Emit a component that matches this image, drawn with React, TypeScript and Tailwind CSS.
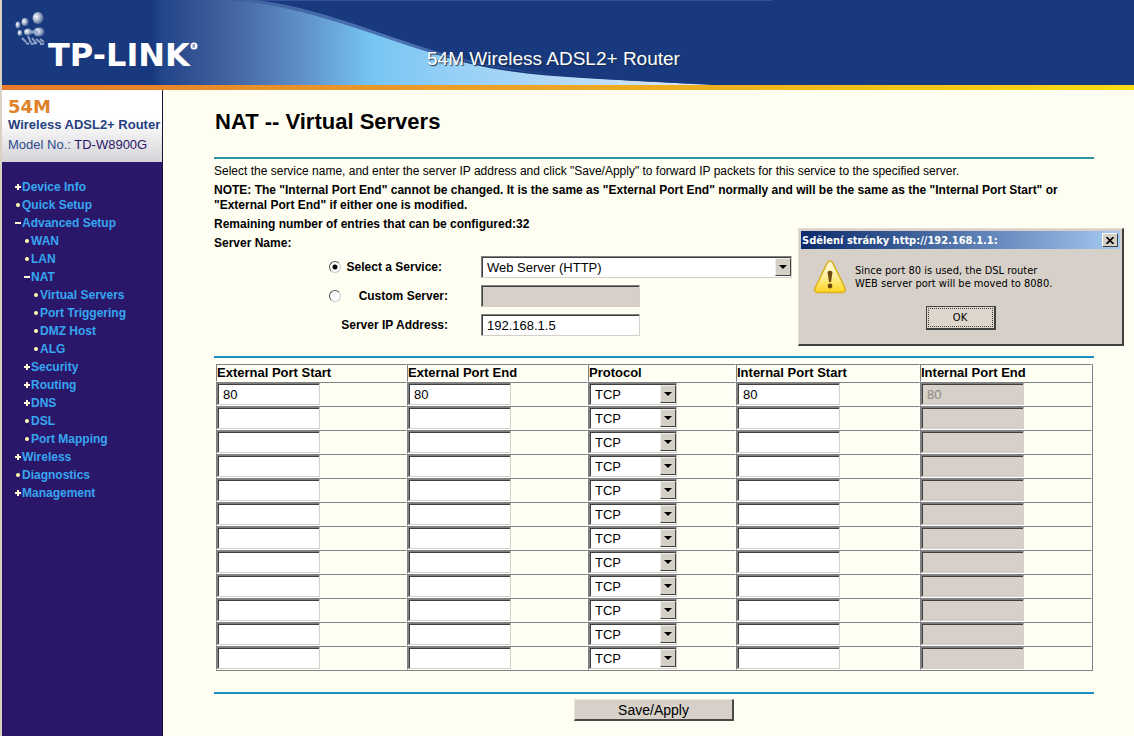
import React, { useState } from "react";
import clsx from "clsx";

const menu = [
  { label: "Device Info", level: 0, mark: "plus" },
  { label: "Quick Setup", level: 0, mark: "dot" },
  { label: "Advanced Setup", level: 0, mark: "minus" },
  { label: "WAN", level: 1, mark: "dot" },
  { label: "LAN", level: 1, mark: "dot" },
  { label: "NAT", level: 1, mark: "minus" },
  { label: "Virtual Servers", level: 2, mark: "dot" },
  { label: "Port Triggering", level: 2, mark: "dot" },
  { label: "DMZ Host", level: 2, mark: "dot" },
  { label: "ALG", level: 2, mark: "dot" },
  { label: "Security", level: 1, mark: "plus" },
  { label: "Routing", level: 1, mark: "plus" },
  { label: "DNS", level: 1, mark: "plus" },
  { label: "DSL", level: 1, mark: "dot" },
  { label: "Port Mapping", level: 1, mark: "dot" },
  { label: "Wireless", level: 0, mark: "plus" },
  { label: "Diagnostics", level: 0, mark: "dot" },
  { label: "Management", level: 0, mark: "plus" },
];

const indents = ["pl-3", "pl-[21px]", "pl-[30px]"];

const columns = [
  { title: "External Port Start", width: "w-[191px]" },
  { title: "External Port End", width: "w-[181px]" },
  { title: "Protocol", width: "w-[148px]" },
  { title: "Internal Port Start", width: "w-[184px]" },
  { title: "Internal Port End", width: "w-[172px]" },
];

const emptyRow = { extStart: "", extEnd: "", protocol: "TCP", intStart: "" };

const sunken =
  "h-[22px] border border-t-[#808080] border-l-[#808080] border-r-[#d4d0c8] border-b-[#d4d0c8] bg-white pl-[5px] text-[13px] text-black shadow-[inset_1px_1px_0_#404040] outline-none disabled:bg-[#d6d0c9] disabled:text-[#8a8680]";

function Mark({ kind }: { kind: string }) {
  return (
    <svg width="8" height="8" viewBox="0 0 8 8" className="shrink-0">
      {kind === "dot" && <circle cx="4" cy="4" r="2" fill="#ffffb0" />}
      {kind !== "dot" && <rect x="1" y="3" width="6" height="2" fill="#fff8d8" />}
      {kind === "plus" && <rect x="3" y="1" width="2" height="6" fill="#fff8d8" />}
    </svg>
  );
}

function WinSelect({
  label,
  value,
  options,
  width,
  onChange,
}: {
  label: string;
  value: string;
  options: string[];
  width: string;
  onChange: (v: string) => void;
}) {
  return (
    <div className={clsx("relative", width)}>
      <select
        aria-label={label}
        value={value}
        onChange={(e) => onChange(e.target.value)}
        className={clsx(sunken, "block w-full appearance-none")}
      >
        {options.map((o) => (
          <option key={o}>{o}</option>
        ))}
      </select>
      <span className="pointer-events-none absolute top-[2px] right-px flex h-[18px] w-4 items-center justify-center border border-t-[#f0eee8] border-r-[#404040] border-b-[#404040] border-l-[#f0eee8] bg-[#d4d0c8]">
        <svg width="8" height="4" viewBox="0 0 8 4">
          <path d="M0 0h8L4 4z" fill="#000" />
        </svg>
      </span>
    </div>
  );
}

function Banner() {
  return (
    <header className="relative flex h-[90px] items-start overflow-hidden border-b-5 border-[#f0b41c] bg-[#18397d] [border-image:linear-gradient(90deg,#e8792a,#e8962a_30%,#efb31c_65%,#fadc10)_1]">
      <svg
        width="772"
        height="85"
        viewBox="0 0 772 85"
        className="absolute top-0 left-0"
      >
        <defs>
          <linearGradient id="sky" gradientUnits="userSpaceOnUse" x1="150" y1="0" x2="700" y2="0">
            <stop offset="0" stopColor="#18397d" />
            <stop offset="0.02" stopColor="#23458a" />
            <stop offset="0.14" stopColor="#42639f" />
            <stop offset="0.27" stopColor="#5f8fc6" />
            <stop offset="0.4" stopColor="#76c5f2" />
            <stop offset="0.55" stopColor="#96d0f6" />
            <stop offset="0.8" stopColor="#bcdcf6" />
            <stop offset="1" stopColor="#dfe8f0" />
          </linearGradient>
          <linearGradient id="rim" gradientUnits="userSpaceOnUse" x1="200" y1="0" x2="560" y2="0">
            <stop offset="0" stopColor="#3d5c9b" />
            <stop offset="0.55" stopColor="#4a74b4" />
            <stop offset="1" stopColor="#18397d" />
          </linearGradient>
        </defs>
        <path d="M210 0H770V1H280z" fill="#34529a" />
        <path
          d="M225 0C300 4 350 27 430 53S560 76 710 85H150V0z"
          fill="url(#sky)"
        />
        <path
          d="M222 0H255C315 8 360 28 430 50S560 76 700 84C560 78 495 72 430 53S300 4 222 0z"
          fill="url(#rim)"
        />
      </svg>
      <svg
        width="34"
        height="36"
        viewBox="0 0 34 36"
        className="relative mt-[11px] ml-3 shrink-0"
      >
        <defs>
          <radialGradient id="ball" cx="0.35" cy="0.4" r="0.7">
            <stop offset="0" stopColor="#fff" />
            <stop offset="0.4" stopColor="#b4c2d8" />
            <stop offset="1" stopColor="#3d5688" />
          </radialGradient>
        </defs>
        <ellipse cx="24" cy="7" rx="5.500" ry="6" fill="url(#ball)" />
        <ellipse cx="11" cy="11" rx="3.500" ry="4" fill="url(#ball)" />
        <ellipse cx="4" cy="14" rx="2.500" ry="3.500" fill="url(#ball)" />
        <ellipse cx="6" cy="22" rx="2.500" ry="3" fill="url(#ball)" />
        <ellipse cx="14" cy="21" rx="4" ry="3.500" fill="url(#ball)" />
        <ellipse cx="25" cy="21" rx="5.500" ry="4.500" fill="url(#ball)" />
        <path d="M16 21H24" stroke="#8fa3c6" strokeWidth="3" />
        <path
          d="M8 27l4 4M14 25l3 7M18 27l4 5M22 28l5 4M26 28l4 3M12 32l3 1M17 33l6-1M26 33h4"
          stroke="#8ea1c4"
          strokeWidth="2"
          fill="none"
        />
      </svg>
      <div className="relative mt-[38px] flex text-white">
        <span className="font-['DejaVu_Sans',sans-serif] text-[32px] leading-[34px] font-bold">
          TP-LINK
        </span>
        <svg width="8" height="8" viewBox="0 0 8 8" className="mt-1">
          <circle cx="4" cy="4" r="3.500" fill="#fff" />
          <path d="M3 6V2.500H4.500V4H3M4 4L5 6" stroke="#5c78a8" strokeWidth="0.8" fill="none" />
        </svg>
      </div>
      <p className="absolute top-12 left-[425px] text-[19px] leading-[22px] whitespace-nowrap text-white [text-shadow:1px_1px_1px_#1c2f50]">
        54M Wireless ADSL2+ Router
      </p>
    </header>
  );
}

function Sidebar() {
  return (
    <aside className="w-[161px] shrink-0 border-r border-[#1a1238] bg-[#2b1769]">
      <div className="h-[72px] bg-linear-to-b from-white from-40% to-[#d4d4d8] px-[6px] pt-2 text-[13px] leading-[20px] whitespace-nowrap text-[#2f4a8c]">
        <p className="font-['DejaVu_Sans',sans-serif] text-[18px] leading-[17px] font-bold text-[#e0822a]">
          54M
        </p>
        <p className="font-bold text-[#27407f]">Wireless ADSL2+ Router</p>
        <p>
          Model No.: <span className="text-[#2b1769]">TD-W8900G</span>
        </p>
      </div>
      <nav className="pt-4">
        <ul>
          {menu.map((item) => (
            <li key={item.label} className={indents[item.level]}>
              <a
                href="#"
                className="flex items-center text-[12px] leading-[18px] font-bold whitespace-nowrap text-[#36a6f0]"
              >
                <Mark kind={item.mark} />
                {item.label}
              </a>
            </li>
          ))}
        </ul>
      </nav>
    </aside>
  );
}

function Alert({ onClose }: { onClose: () => void }) {
  return (
    <div
      role="alertdialog"
      aria-labelledby="alert-title"
      className="absolute top-[228px] right-[10px] w-[326px] border-t border-r-2 border-b-2 border-l border-t-[#e4e0d8] border-r-[#404040] border-b-[#404040] border-l-[#e4e0d8] bg-[#d6d0c9] p-[2px] font-['DejaVu_Sans_Condensed','DejaVu_Sans',sans-serif] text-[11px] leading-[13px] text-black"
    >
      <div className="flex h-[18px] items-center justify-between bg-linear-to-r from-[#0c2a6c] to-[#a6caf0] pr-[2px] pl-px">
        <span id="alert-title" className="font-bold whitespace-nowrap text-white">
          Sdělení stránky http://192.168.1.1:
        </span>
        <button
          aria-label="Close"
          onClick={onClose}
          className="flex h-[14px] w-4 items-center justify-center border border-t-white border-r-[#404040] border-b-[#404040] border-l-white bg-[#d4d0c8]"
        >
          <svg width="8" height="7" viewBox="0 0 8 7">
            <path d="M0.500 0L7.500 7M7.500 0L0.500 7" stroke="#000" strokeWidth="1.6" />
          </svg>
        </button>
      </div>
      <div className="flex gap-2 px-3 pt-[11px]">
        <svg width="34" height="34" viewBox="0 0 34 34" className="shrink-0">
          <defs>
            <linearGradient id="warn" x1="0" y1="0" x2="0" y2="1">
              <stop offset="0" stopColor="#fffbe0" />
              <stop offset="0.5" stopColor="#fff09a" />
              <stop offset="1" stopColor="#ffd41c" />
            </linearGradient>
          </defs>
          <path
            d="M14.500 2.500Q17 -0.500 19.500 2.500L32 28Q33.500 32.500 29 32.500H5Q0.500 32.500 2 28z"
            fill="url(#warn)"
            stroke="#d8b020"
            strokeWidth="1.500"
          />
          <path d="M14.500 12Q17 9.500 19.500 12L18 22H16z" fill="#6d4a10" />
          <circle cx="17" cy="26" r="2.400" fill="#6d4a10" />
        </svg>
        <p className="pt-1">
          Since port 80 is used, the DSL router
          <br />
          WEB server port will be moved to 8080.
        </p>
      </div>
      <div className="flex justify-center pt-3 pb-3">
        <button
          onClick={onClose}
          className="h-6 w-[70px] border border-r-2 border-b-2 border-[#404040] bg-[#dcd6cc] p-px"
        >
          <span className="flex h-full items-center justify-center border border-dotted border-[#404040]">
            OK
          </span>
        </button>
      </div>
    </div>
  );
}

export default function App() {
  const [mode, setMode] = useState("service");
  const [service, setService] = useState("Web Server (HTTP)");
  const [custom, setCustom] = useState("");
  const [address, setAddress] = useState("192.168.1.5");
  const [showAlert, setShowAlert] = useState(true);
  const [rows, setRows] = useState(() => [
    { extStart: "80", extEnd: "80", protocol: "TCP", intStart: "80" },
    ...Array.from({ length: 11 }, () => ({ ...emptyRow })),
  ]);

  const update = (index: number, key: string, value: string) => {
    setRows((prev) =>
      prev.map((row, i) => (i === index ? { ...row, [key]: value } : row))
    );
  };

  const radio =
    "size-3 appearance-none rounded-full border border-t-[#555] border-r-[#ccc] border-b-[#ccc] border-l-[#555] bg-white checked:bg-[radial-gradient(circle,#000_2px,#fff_3px)]";

  return (
    <div className="relative flex min-h-screen flex-col border-l-2 border-[#d9d2c2] bg-[#fffef2] font-['Liberation_Sans',Arial,sans-serif] text-[12px] leading-[15px] text-black">
      <Banner />
      <div className="flex grow">
        <Sidebar />
        <main className="min-w-0 grow pt-5 pr-10 pb-[14px] pl-[51px]">
          <h1 className="pl-px text-[22px] leading-[24px] font-bold">
            NAT -- Virtual Servers
          </h1>
          <hr className="mt-[23px] border-t-2 border-[#2f929e]" />
          <form onSubmit={(e) => e.preventDefault()}>
            <div className="mt-[5px] space-y-1 font-bold">
              <p className="font-normal">
                Select the service name, and enter the server IP address and
                click "Save/Apply" to forward IP packets for this service to
                the specified server.
              </p>
              <p>
                NOTE: The "Internal Port End" cannot be changed. It is the same
                as "External Port End" normally and will be the same as the
                "Internal Port Start" or "External Port End" if either one is
                modified.
              </p>
              <p>Remaining number of entries that can be configured:32</p>
              <p>Server Name:</p>
            </div>

            <div className="mt-[5px] space-y-[7px] font-bold">
              <div className="flex items-center gap-[33px]">
                <div className="flex w-[234px] items-center justify-between pr-[6px] pl-[115px]">
                  <input
                    id="mode-service"
                    type="radio"
                    name="mode"
                    className={radio}
                    checked={mode === "service"}
                    onChange={() => setMode("service")}
                  />
                  <label htmlFor="mode-service">Select a Service:</label>
                </div>
                <WinSelect
                  label="Service"
                  value={service}
                  options={["Web Server (HTTP)", "FTP Server", "Mail Server (SMTP)"]}
                  width="w-[311px] font-normal"
                  onChange={setService}
                />
              </div>
              <div className="flex items-center gap-[33px]">
                <div className="flex w-[234px] items-center justify-between pl-[115px]">
                  <input
                    id="mode-custom"
                    type="radio"
                    name="mode"
                    className={radio}
                    checked={mode === "custom"}
                    onChange={() => setMode("custom")}
                  />
                  <label htmlFor="mode-custom">Custom Server:</label>
                </div>
                <input
                  type="text"
                  aria-label="Custom server name"
                  className={clsx(sunken, "w-[159px] font-normal")}
                  value={custom}
                  disabled={mode !== "custom"}
                  onChange={(e) => setCustom(e.target.value)}
                />
              </div>
              <div className="flex items-center gap-[33px]">
                <label htmlFor="address" className="w-[234px] text-right">
                  Server IP Address:
                </label>
                <input
                  id="address"
                  type="text"
                  className={clsx(sunken, "w-[159px] font-normal")}
                  value={address}
                  onChange={(e) => setAddress(e.target.value)}
                />
              </div>
            </div>

            <hr className="mt-5 border-t-2 border-[#1b8fc3]" />
            <div className="mt-[6px] px-[2px]">
              <table className="w-full table-fixed border-separate border-spacing-0 border-r border-b border-[#808080]">
                <thead>
                  <tr>
                    {columns.map((col) => (
                      <th
                        key={col.title}
                        className={clsx(
                          "border border-t-[#808080] border-r-white border-b-white border-l-[#808080] p-0 text-left text-[13px] leading-[16px]",
                          col.width
                        )}
                      >
                        {col.title}
                      </th>
                    ))}
                  </tr>
                </thead>
                <tbody className="[&_td]:border [&_td]:border-t-[#808080] [&_td]:border-r-white [&_td]:border-b-white [&_td]:border-l-[#808080] [&_td]:p-0">
                  {rows.map((row, i) => (
                    <tr key={i}>
                      <td>
                        <input
                          type="text"
                          aria-label={`External port start ${i + 1}`}
                          className={clsx(sunken, "block w-[103px]")}
                          value={row.extStart}
                          onChange={(e) => update(i, "extStart", e.target.value)}
                        />
                      </td>
                      <td>
                        <input
                          type="text"
                          aria-label={`External port end ${i + 1}`}
                          className={clsx(sunken, "block w-[103px]")}
                          value={row.extEnd}
                          onChange={(e) => update(i, "extEnd", e.target.value)}
                        />
                      </td>
                      <td>
                        <WinSelect
                          label={`Protocol ${i + 1}`}
                          value={row.protocol}
                          options={["TCP", "UDP", "TCP/UDP"]}
                          width="w-[88px]"
                          onChange={(v) => update(i, "protocol", v)}
                        />
                      </td>
                      <td>
                        <input
                          type="text"
                          aria-label={`Internal port start ${i + 1}`}
                          className={clsx(sunken, "block w-[103px]")}
                          value={row.intStart}
                          onChange={(e) => update(i, "intStart", e.target.value)}
                        />
                      </td>
                      <td>
                        <input
                          type="text"
                          aria-label={`Internal port end ${i + 1}`}
                          className={clsx(sunken, "block w-[103px]")}
                          value={row.extEnd}
                          disabled
                          readOnly
                        />
                      </td>
                    </tr>
                  ))}
                </tbody>
              </table>
            </div>

            <hr className="mt-[21px] border-t-2 border-[#1b8fc3]" />
            <div className="mt-[5px] flex justify-center">
              <button
                type="submit"
                className="h-[22px] w-40 border-t border-r-2 border-b-2 border-l border-t-[#e8e4dc] border-r-[#484848] border-b-[#484848] border-l-[#e8e4dc] bg-[#d6d0c9] text-[14px] leading-[18px]"
              >
                Save/Apply
              </button>
            </div>
          </form>
        </main>
      </div>
      {showAlert && <Alert onClose={() => setShowAlert(false)} />}
    </div>
  );
}
